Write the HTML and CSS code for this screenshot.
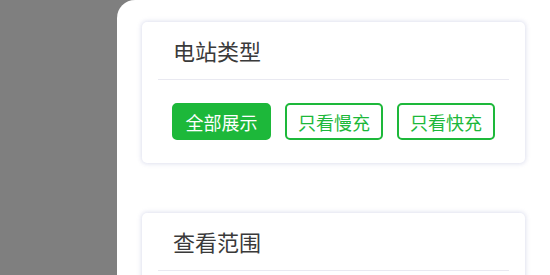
FILE: index.html
```html
<!DOCTYPE html>
<html lang="zh">
<head>
<meta charset="utf-8">
<link rel="stylesheet" href="styles.css">
</head>
<body>
<div class="panel">
  <div class="card">
    <div class="card-head">电站类型</div>
    <div class="card-body">
      <button class="btn btn-active">全部展示</button>
      <button class="btn">只看慢充</button>
      <button class="btn">只看快充</button>
    </div>
  </div>
  <div class="card">
    <div class="card-head">查看范围</div>
    <div class="card-body"></div>
  </div>
</div>
</body>
</html>
```
FILE: styles.css
```css
html, body {
  margin: 0;
  height: 100%;
  overflow: hidden;
}
body {
  background: #7f7f7f;
  font-family: "Noto Sans CJK SC", "Noto Sans", sans-serif;
}
.panel {
  margin-left: 117px;
  height: 100%;
  background: #ffffff;
  border-top-left-radius: 18px;
  padding: 22px 25px 0 25px;
  box-sizing: border-box;
  display: flex;
  flex-direction: column;
  gap: 50px;
  overflow: hidden;
}
.card {
  width: 383px;
  background: #fff;
  border-radius: 5px;
  box-shadow: 0 0 4px 1px rgba(215, 218, 235, 0.8);
  flex-shrink: 0;
}
.card-head {
  margin: 0 16px;
  height: 58px;
  padding-left: 15px;
  border-bottom: 1.5px solid #e9e9f1;
  font-size: 22px;
  font-weight: 400;
  color: #3a3a3a;
  display: flex;
  align-items: center;
  box-sizing: border-box;
  padding-bottom: 1px;
}
.card-body {
  padding: 23px 0 23px 30px;
  display: flex;
  gap: 14px;
  min-height: 37px;
}
.btn {
  height: 37px;
  width: 98px;
  box-sizing: border-box;
  border: 2px solid #1db83a;
  background: #fff;
  color: #1db83a;
  border-radius: 5px;
  font-family: inherit;
  font-size: 18px;
  padding: 0;
  display: flex;
  align-items: center;
  justify-content: center;
}
.btn-active {
  background: #1db83a;
  color: #fff;
  width: 99px;
}
```
